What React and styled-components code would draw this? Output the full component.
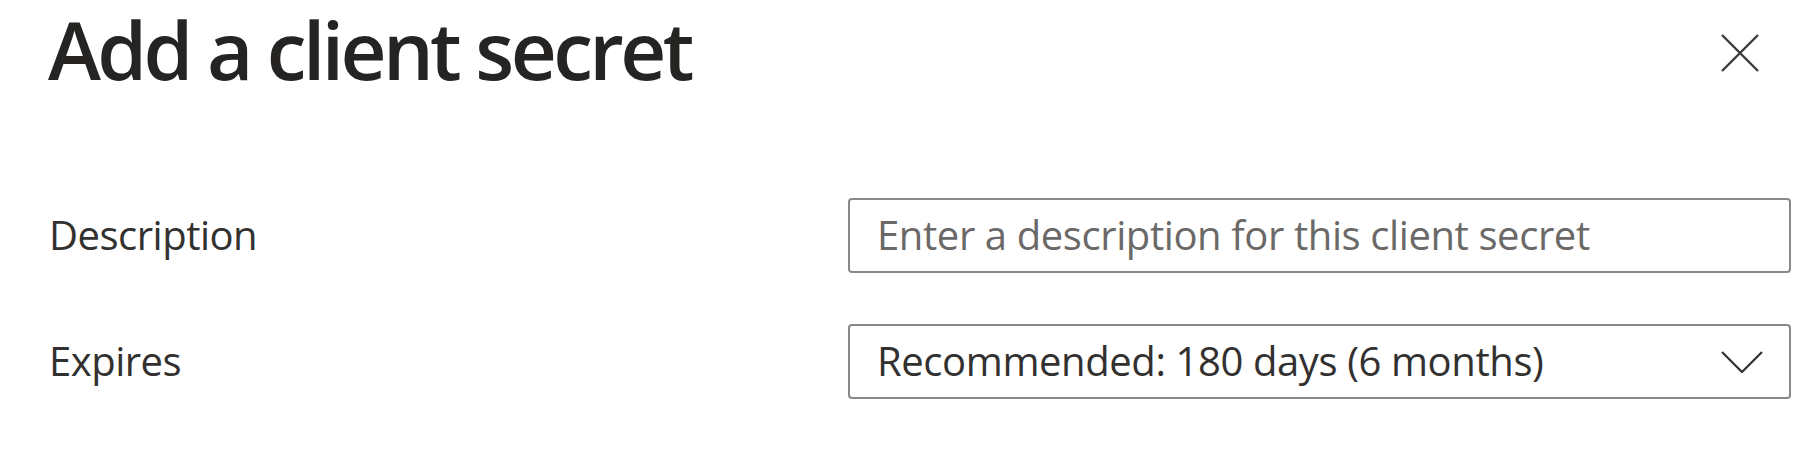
import React from "react";
import styled, { createGlobalStyle } from "styled-components";

const GlobalStyle = createGlobalStyle`
  html, body {
    margin: 0;
    padding: 0;
    background: #ffffff;
  }
  body {
    font-family: "Open Sans", "Noto Sans", sans-serif;
    color: #323130;
  }
`;

const Panel = styled.div`
  width: 1820px;
  height: 466px;
  box-sizing: border-box;
  padding: 0 29px 0 48px;
  background: #ffffff;
`;

const Header = styled.div`
  display: flex;
  justify-content: space-between;
  align-items: flex-start;
`;

const Title = styled.h1`
  margin: 1px 0 0;
  font-size: 80px;
  line-height: 96px;
  font-weight: 600;
  color: #252423;
  letter-spacing: -3.6px;
`;

const CloseButton = styled.button`
  display: flex;
  align-items: center;
  justify-content: center;
  width: 38px;
  height: 38px;
  margin: 34px 32px 0 0;
  padding: 0;
  border: none;
  background: transparent;
  color: #3b3a39;
  cursor: pointer;
`;

const Form = styled.div`
  display: grid;
  grid-template-columns: 800px 1fr;
  row-gap: 51px;
  align-items: center;
  margin-top: 101px;
`;

const Label = styled.label`
  font-size: 40px;
  letter-spacing: -0.5px;
  color: #323130;
  padding: 0 0 3px 1px;
`;

const Field = styled.div`
  display: flex;
  align-items: center;
  justify-content: space-between;
  height: 75px;
  box-sizing: border-box;
  padding: 0 26px 3px 27px;
  border: 2px solid #8a8886;
  border-radius: 4px;
  font-size: 40px;
  letter-spacing: -0.4px;
  color: ${(p) => (p.$placeholder ? "#6b6967" : "#323130")};
`;

const Chevron = styled.svg`
  width: 42px;
  height: 22px;
  margin-top: 3px;
`;

const App = () => (
  <>
    <GlobalStyle />
    <Panel>
      <Header>
        <Title>Add a client secret</Title>
        <CloseButton aria-label="Close">
          <svg width="38" height="38" viewBox="0 0 38 38">
            <path d="M1 1 L37 37 M37 1 L1 37" stroke="currentColor" strokeWidth="2.4" fill="none" />
          </svg>
        </CloseButton>
      </Header>
      <Form>
        <Label>Description</Label>
        <Field $placeholder>Enter a description for this client secret</Field>
        <Label>Expires</Label>
        <Field>
          <span>Recommended: 180 days (6 months)</span>
          <Chevron viewBox="0 0 42 22">
            <path d="M1 1 L21 21 L41 1" stroke="#323130" strokeWidth="2.2" fill="none" />
          </Chevron>
        </Field>
      </Form>
    </Panel>
  </>
);

export default App;
